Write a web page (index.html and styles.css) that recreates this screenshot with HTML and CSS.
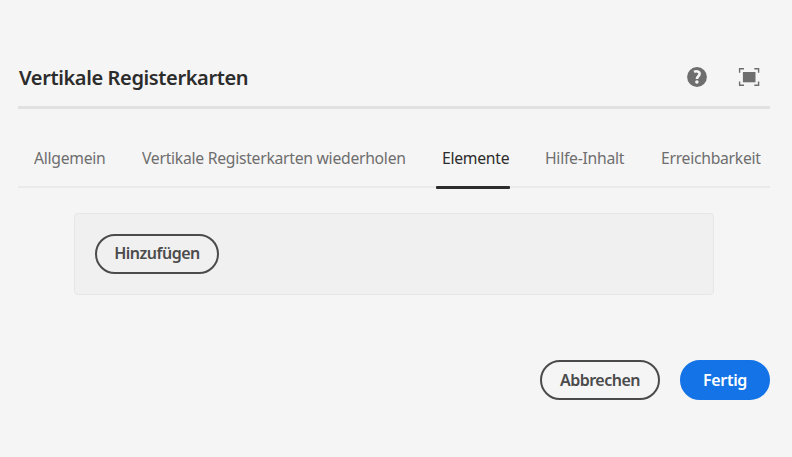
FILE: index.html
```html
<!DOCTYPE html>
<html lang="de">
<head>
<meta charset="utf-8">
<title>Vertikale Registerkarten</title>
<link rel="stylesheet" href="styles.css">
</head>
<body>
<main class="dialog">
  <header class="header">
    <h1 class="title">Vertikale Registerkarten</h1>
    <div class="actions">
      <svg class="icon" width="20" height="20" viewBox="0 0 20 20" aria-label="Hilfe"><circle cx="10" cy="10" r="9.9" fill="#6e6e6e"/><path d="M7 4.900C9 3.800 12.600 4.100 12.600 6.800C12.600 9.200 9.900 9.300 9.900 12" fill="none" stroke="#f5f5f5" stroke-width="2.600"/><circle cx="9.900" cy="15" r="1.800" fill="#f5f5f5"/></svg>
      <svg class="icon" width="22" height="20" viewBox="0 0 22 20" aria-label="Vollbild"><path d="M4.900 5h12.600v10.300H4.900z" fill="#6e6e6e"/><path d="M1.600 5.800V1.700H6M16.300 1.700h4.300v4.100M20.600 14.500v3.800h-4.300M6 18.300H1.600v-3.800" fill="none" stroke="#6e6e6e" stroke-width="1.400"/></svg>
    </div>
  </header>
  <nav class="tabs">
    <a class="tab"><span class="label">Allgemein</span></a>
    <a class="tab"><span class="label">Vertikale Registerkarten wiederholen</span></a>
    <a class="tab tab-active"><span class="label">Elemente</span></a>
    <a class="tab"><span class="label">Hilfe-Inhalt</span></a>
    <a class="tab"><span class="label">Erreichbarkeit</span></a>
  </nav>
  <section class="panel">
    <button class="button button-add">Hinzufügen</button>
  </section>
  <footer class="footer">
    <button class="button button-cancel">Abbrechen</button>
    <button class="button button-primary">Fertig</button>
  </footer>
</main>
</body>
</html>
```
FILE: styles.css
```css
* { box-sizing: border-box; }
body {
  margin: 0;
  height: 457px;
  background: #f5f5f5;
  color: #2c2c2c;
  font-family: "Noto Sans", "Open Sans", sans-serif;
}
.dialog { padding: 48px 22px 0 18px; }
.header {
  display: flex;
  align-items: center;
  justify-content: space-between;
  height: 61px;
  padding-right: 10px;
  border-bottom: 3px solid #e1e1e1;
}
.title {
  margin: 0;
  padding: 0 0 1px 1px;
  font-size: 20.5px;
  line-height: 28px;
  font-weight: 600;
  letter-spacing: -0.4px;
  white-space: nowrap;
  transform: scaleX(0.977);
  transform-origin: left;
}
.actions { display: flex; gap: 31px; }
.icon { display: block; }
.tabs {
  display: grid;
  grid-template-columns: 72px 264px 67px 80px 99px;
  column-gap: 36px;
  height: 79px;
  padding: 32px 0 0 16px;
  border-bottom: 2px solid #eaeaea;
}
.tab {
  position: relative;
  color: #6e6e6e;
  font-size: 17px;
  line-height: 34px;
  letter-spacing: -0.3px;
  white-space: nowrap;
}
.label {
  display: inline-block;
  transform: scaleX(0.925);
  transform-origin: left;
}
.tab-active { color: #2c2c2c; }
.tab-active::after {
  content: "";
  position: absolute;
  right: -0.5px;
  bottom: -3px;
  left: -6.5px;
  height: 3px;
  border-radius: 1px;
  background: #2c2c2c;
}
.panel {
  width: 640px;
  height: 82px;
  margin: 25px 0 0 56px;
  padding: 20px;
  border: 1px solid #e6e6e6;
  border-radius: 4px;
  background: #f0f0f0;
}
.button {
  display: block;
  height: 40px;
  padding: 1px 0 0;
  border: 2px solid #4b4b4b;
  border-radius: 20px;
  background: transparent;
  color: #4b4b4b;
  font: 600 16px/35px "Noto Sans", "Open Sans", sans-serif;
  letter-spacing: -0.5px;
  white-space: nowrap;
}
.button-add { width: 124px; padding: 0 0 2px; line-height: 34px; }
.button-cancel { width: 120px; }
.button-primary { width: 90px; border-color: #1473e6; background: #1473e6; color: #fff; letter-spacing: -0.3px; }
.footer {
  display: flex;
  justify-content: flex-end;
  gap: 20px;
  margin-top: 65px;
}
```
